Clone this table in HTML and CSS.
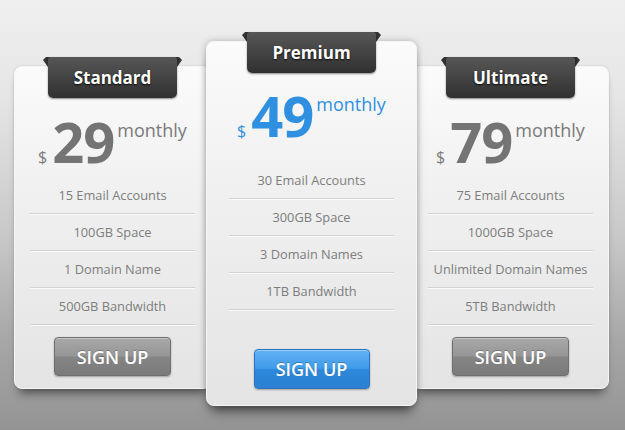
FILE: index.html
```html
<!DOCTYPE html>
<html lang="en">
<head>
  <meta charset="UTF-8">
  <title>Pricing Tables</title>
  <meta name="viewport" content="width=device-width, initial-scale=1.0">

  <link rel="stylesheet" href="styles.css">
</head>
<body>

  <div class="pricing">

    <!-- Standard -->
    <div class="plan side">
      <div class="plan-tab">Standard</div>
      <div class="price">
        <span class="currency">$</span>
        <span class="amount">29</span>
        <span class="period">monthly</span>
      </div>
      <ul class="features">
        <li>15 Email Accounts</li>
        <li>100GB Space</li>
        <li>1 Domain Name</li>
        <li>500GB Bandwidth</li>
      </ul>
      <button class="signup">SIGN UP</button>
    </div>

    <!-- Premium -->
    <div class="plan featured">
      <div class="plan-tab">Premium</div>
      <div class="price">
        <span class="currency">$</span>
        <span class="amount">49</span>
        <span class="period">monthly</span>
      </div>
      <ul class="features">
        <li>30 Email Accounts</li>
        <li>300GB Space</li>
        <li>3 Domain Names</li>
        <li>1TB Bandwidth</li>
      </ul>
      <button class="signup">SIGN UP</button>
    </div>

    <!-- Ultimate -->
    <div class="plan side">
      <div class="plan-tab">Ultimate</div>
      <div class="price">
        <span class="currency">$</span>
        <span class="amount">79</span>
        <span class="period">monthly</span>
      </div>
      <ul class="features">
        <li>75 Email Accounts</li>
        <li>1000GB Space</li>
        <li>Unlimited Domain Names</li>
        <li>5TB Bandwidth</li>
      </ul>
      <button class="signup">SIGN UP</button>
    </div>

  </div>

</body>
</html>
```

FILE: styles.css
```css
/* Grundlayout */
html, body {
  height: 430px;
}
body {
  margin: 0;
  padding: 0;
  overflow: hidden;
  font-family: "Open Sans", "Liberation Sans", sans-serif;
  background: linear-gradient(to bottom, #efefef 0%, #e6e6e6 22%, #c8c8c8 55%, #a6a6a6 80%, #949494 100%);
}

/* Reihe der Tarife */
.pricing {
  display: flex;
  align-items: flex-start;
  padding-left: 14px;
}

/* Karte */
.plan {
  position: relative;
  z-index: 1;
  box-sizing: border-box;
  display: flex;
  flex-direction: column;
  align-items: center;
  background: linear-gradient(to bottom, #fbfbfb 0%, #f0f0f0 40%, #e4e4e4 100%);
  border: 1px solid #f6f6f6;
  border-radius: 8px;
  box-shadow: 0 9px 10px -5px rgba(0,0,0,0.5), 0 0 2px rgba(0,0,0,0.18);
}
.plan.side {
  width: 197px;
  height: 323px;
  margin-top: 66px;
}
.plan.featured {
  z-index: 2;
  width: 211px;
  height: 365px;
  margin: 41px -5px 0;
  box-shadow: 0 10px 12px -5px rgba(0,0,0,0.55), 0 0 6px rgba(0,0,0,0.25);
}

/* Reiter oben */
.plan-tab {
  position: relative;
  width: 129px;
  height: 41px;
  margin-top: -10px;
  line-height: 41px;
  text-align: center;
  font-size: 17px;
  font-weight: bold;
  color: #fff;
  text-shadow: 0 1px 2px rgba(0,0,0,0.9);
  background: linear-gradient(to bottom, #565656 0%, #444 50%, #303030 100%);
  border-radius: 3px 3px 5px 5px;
  box-shadow: 0 1px 2px rgba(0,0,0,0.45);
}
.plan-tab::before {
  content: "";
  position: absolute;
  top: 0;
  left: -5px;
  right: -5px;
  height: 10px;
  z-index: -1;
  background: #333;
  clip-path: polygon(0 3px, 3px 0, calc(100% - 3px) 0, 100% 3px, calc(100% - 5px) 100%, 5px 100%);
}

/* Preis */
.price {
  display: flex;
  justify-content: center;
  align-items: baseline;
  margin-top: 15px;
  color: #7a7a7a;
}
.featured .price {
  margin-top: 14px;
  color: #2f8fe0;
}
.currency {
  font-size: 16px;
  line-height: 16px;
  margin-right: 5px;
}
.amount {
  font-size: 56px;
  line-height: 56px;
  font-weight: bold;
  letter-spacing: -1px;
  color: #747474;
}
.featured .amount {
  color: #2f8fe0;
}
.period {
  align-self: flex-start;
  margin-top: 8px;
  margin-left: 3px;
  font-size: 18px;
  line-height: 18px;
}

/* Leistungen */
.features {
  list-style: none;
  margin: 8px 0 0;
  align-self: stretch;
  padding: 0 15px;
}
.featured .features {
  margin-top: 19px;
  padding: 0 22px;
}
.features li {
  height: 36px;
  line-height: 37px;
  text-align: center;
  font-size: 12.8px;
  color: #7d7d7d;
  border-bottom: 1px solid #d3d3d3;
  box-shadow: 0 1px 0 #fafafa;
}

/* Button */
.signup {
  width: 117px;
  height: 39px;
  margin-top: 12px;
  padding: 0;
  font-family: inherit;
  font-size: 18px;
  font-weight: 600;
  color: #fff;
  text-shadow: 0 -1px 0 rgba(0,0,0,0.25);
  border: 1px solid #6f6f6f;
  border-radius: 4px;
  background: linear-gradient(to bottom, #a8a8a8 0%, #969696 48%, #858585 52%, #7a7a7a 100%);
  box-shadow: inset 0 1px 0 rgba(255,255,255,0.35), 0 1px 2px rgba(0,0,0,0.3);
  cursor: pointer;
}
.featured .signup {
  width: 116px;
  height: 40px;
  margin-top: 39px;
  border-color: #2a74be;
  background: linear-gradient(to bottom, #63b3f4 0%, #3f9be9 48%, #2d88db 52%, #2b80d2 100%);
}
.signup:hover {
  filter: brightness(1.05);
}
```
